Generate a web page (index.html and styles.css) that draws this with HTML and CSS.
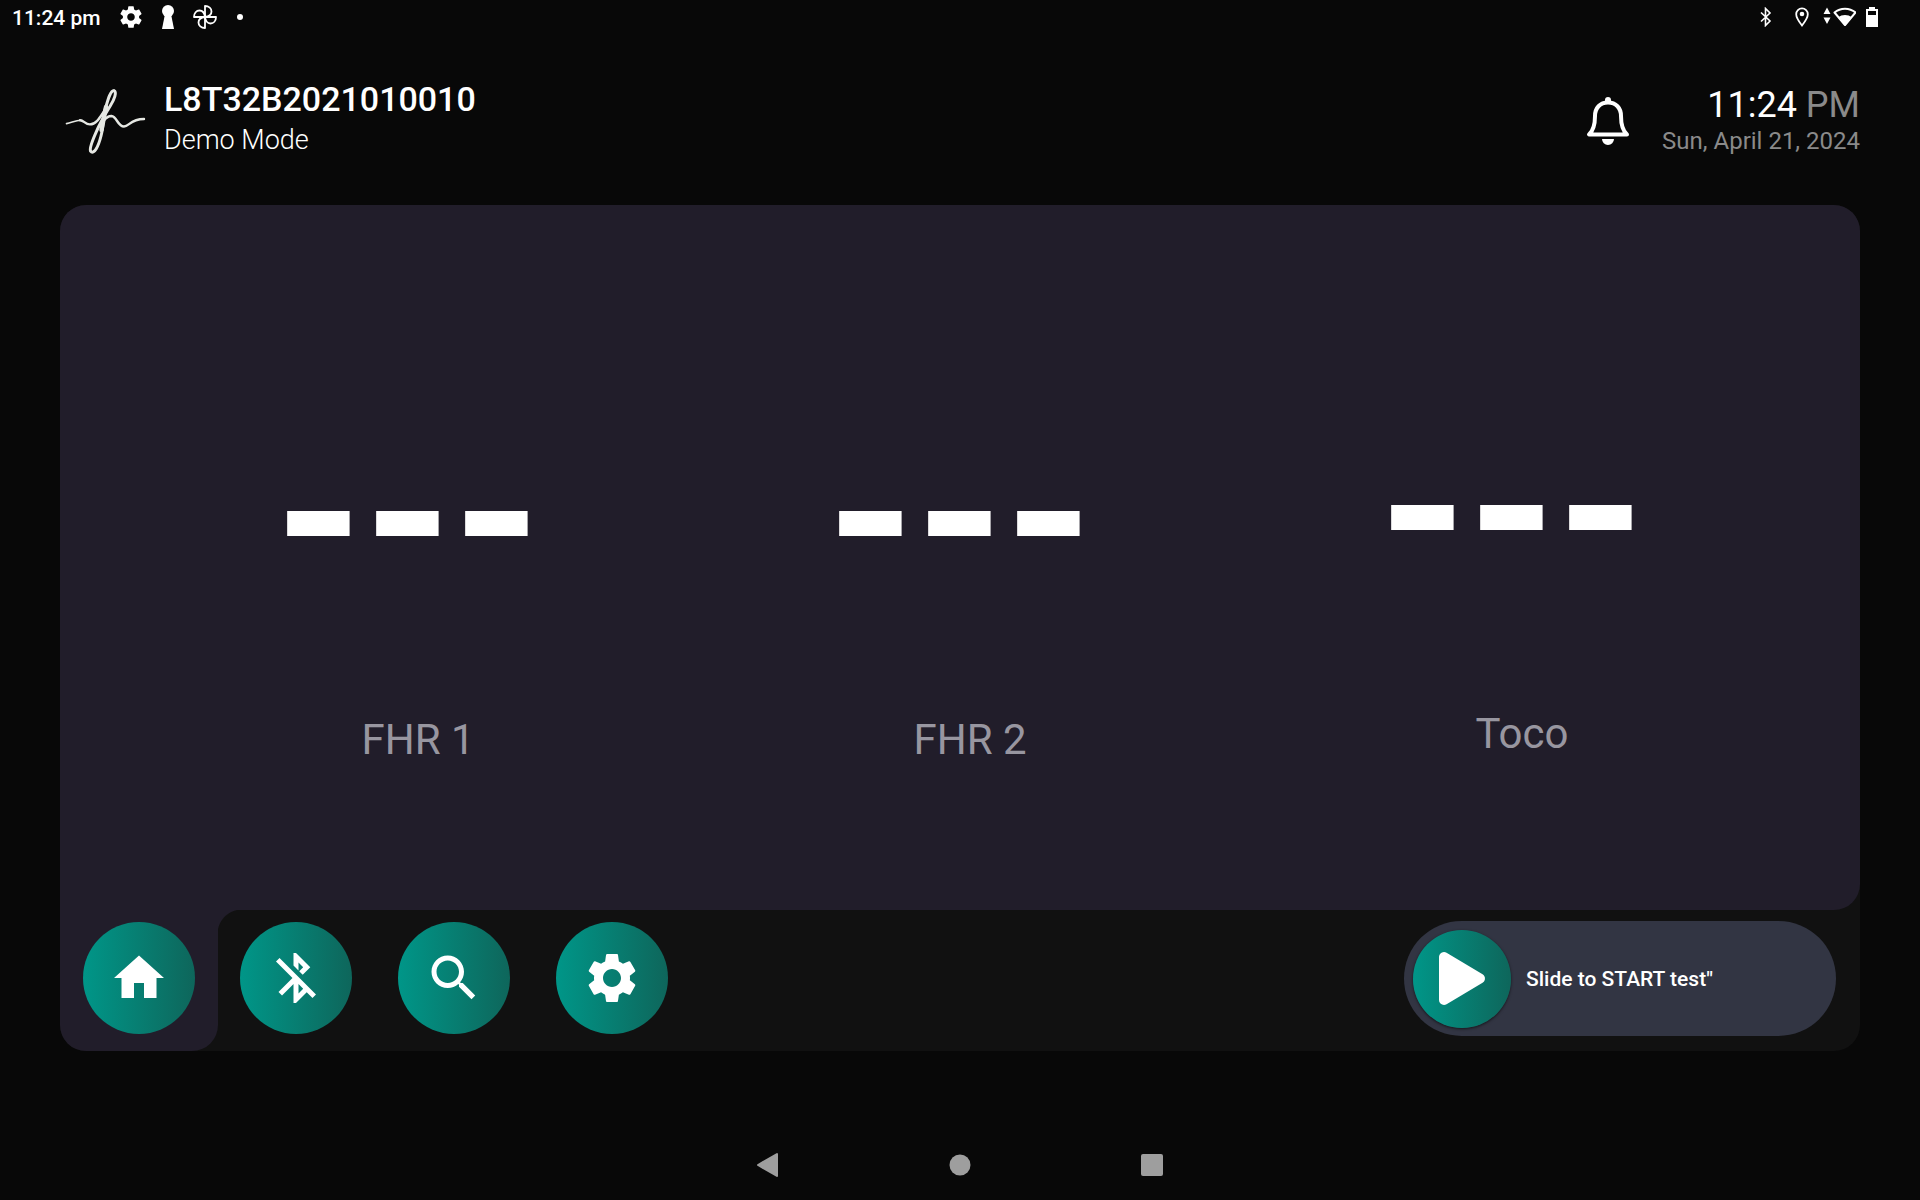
FILE: index.html
```html
<!DOCTYPE html>
<html lang="en">
	<head>
		<meta charset="utf-8">
		<meta name="viewport" content="width=device-width, initial-scale=1">
		<title>Demo Mode</title>
		<link rel="stylesheet" href="styles.css">
	</head>
	<body>
		<div class="statusBar">
			<span class="statusTime">11:24 pm</span>
			<div class="statusIcons">
				<svg width="26" height="26" viewBox="0 0 24 24"><path fill="#fff" d="M19.43 12.98c.04-.32.07-.64.07-.98s-.03-.66-.07-.98l2.11-1.65c.19-.15.24-.42.12-.64l-2-3.46c-.12-.22-.39-.3-.61-.22l-2.49 1c-.52-.4-1.08-.73-1.69-.98l-.38-2.65C14.46 2.18 14.25 2 14 2h-4c-.25 0-.46.18-.49.42l-.38 2.65c-.61.25-1.17.59-1.69.98l-2.49-1c-.23-.09-.49 0-.61.22l-2 3.46c-.13.22-.07.49.12.64l2.11 1.65c-.04.32-.07.65-.07.98s.03.66.07.98l-2.11 1.65c-.19.15-.24.42-.12.64l2 3.46c.12.22.39.3.61.22l2.49-1c.52.4 1.08.73 1.69.98l.38 2.65c.03.24.24.42.49.42h4c.25 0 .46-.18.49-.42l.38-2.65c.61-.25 1.17-.59 1.69-.98l2.49 1c.23.09.49 0 .61-.22l2-3.46c.12-.22.07-.49-.12-.64l-2.11-1.65zM12 15.5c-1.93 0-3.5-1.57-3.5-3.5s1.57-3.5 3.5-3.5 3.5 1.57 3.5 3.5-1.57 3.5-3.5 3.5z"/></svg>
				<svg width="26" height="26" viewBox="0 0 26 26"><circle cx="13" cy="7" r="6" fill="#fff"/><path fill="#fff" d="M10 10h6l3 15H7z"/></svg>
				<svg width="26" height="26" viewBox="0 0 26 26" fill="none" stroke="#fff" stroke-width="1.8" stroke-linejoin="round"><path d="M13 13V2c4 0 6.500 2.500 6.500 5.500S17 12.500 13 13"/><path d="M13 13h11c0 4-2.500 6.500-5.500 6.500S13.500 17 13 13"/><path d="M13 13v11c-4 0-6.500-2.500-6.500-5.500S9 13.500 13 13"/><path d="M13 13H2c0-4 2.500-6.500 5.500-6.500S12.500 9 13 13"/></svg>
				<span class="dot"></span>
			</div>
			<div class="systemIcons">
				<svg width="14" height="20" viewBox="0 0 14 20"><path fill="none" stroke="#fff" stroke-width="1.600" d="M2 5.500l9 8.500-4.500 4.500v-17L11 6l-9 8.500"/></svg>
				<svg width="14" height="20" viewBox="0 0 14 20"><path fill="none" stroke="#fff" stroke-width="1.800" d="M7 18.500C3.500 14 1.200 10.500 1.200 7.200a5.800 5.800 0 0 1 11.600 0c0 3.300-2.300 6.800-5.800 11.300z"/><circle cx="7" cy="7" r="2.300" fill="#fff"/></svg>
				<svg width="33" height="20" viewBox="0 0 33 20"><path fill="#fff" d="M.5 7L4 .5 7.500 7zM.5 10.500h7L4 17z"/><path fill="none" stroke="#fff" stroke-width="2" stroke-linejoin="round" d="M22 18L11.500 5.500c6-5 15-5 21 0z"/><path fill="#fff" d="M22 19l-7-8.500c4-3.300 10-3.300 14 0z"/></svg>
				<svg width="12" height="20" viewBox="0 0 12 20"><path fill="#fff" fill-rule="evenodd" d="M3 0h6v2h3v18H0V2h3zM2 4v4h8V4z"/></svg>
			</div>
		</div>

		<header class="header">
			<svg class="logo" viewBox="62 84 86 76" fill="none" stroke="#e6e8e3" stroke-linecap="round" stroke-linejoin="round">
				<path stroke-width="1.600" d="M66.500 124.600C72 123.500 76 121.200 81 121.300"/>
				<path stroke-width="2.400" d="M80 121.200c4 0 5 4.300 10 4.200 7-.2 11-9 15-14.500"/>
				<path stroke-width="3" d="M105 111c2.500-8.500 5-19.500 9-19.500 3.200 1.500.2 9-3.500 15-4.500 7-8 13-12 21.500-4 9-9.500 20-8 24 3.500 4.500 8-5 10.500-15 3-11 1.500-20 4-26"/>
				<path stroke-width="4.400" d="M106 108c-2 8-2.500 14-4.500 23"/>
				<path stroke-width="2.400" d="M103.500 122c3-4 5-5 8-5 5.500.5 6 10.500 12.500 10.500 5 0 6.500-7.500 20-7.500"/>
			</svg>
			<div class="device">
				<h1>L8T32B2021010010</h1>
				<div class="mode">Demo Mode</div>
			</div>
			<button class="bell" aria-label="Notifications">
				<svg width="44" height="50" viewBox="0 0 44 50"><path fill="none" stroke="#fff" stroke-width="4" stroke-linejoin="round" d="M22 6.500c-8 0-13 5.500-13 13.500 0 9-1.500 14.500-6 18.500h38c-4.500-4-6-9.500-6-18.500 0-8-5-13.500-13-13.500z"/><path fill="#fff" d="M19 6V4a3 3 0 0 1 6 0v2zM16 43h12a6 6 0 0 1-12 0z"/></svg>
			</button>
			<div class="clock">
				<div class="time">11:24 <span>PM</span></div>
				<div class="date">Sun, April 21, 2024</div>
			</div>
		</header>

		<main class="monitor">
			<section class="readings">
				<div class="reading">
					<div class="value">---</div>
					<div class="name">FHR 1</div>
				</div>
				<div class="reading">
					<div class="value">---</div>
					<div class="name">FHR 2</div>
				</div>
				<div class="reading toco">
					<div class="value">---</div>
					<div class="name">Toco</div>
				</div>
			</section>
			<div class="toolbar">
				<div class="tab">
					<button class="round" aria-label="Home">
						<svg width="60" height="60" viewBox="0 0 24 24"><path fill="#fff" d="M10 20v-6h4v6h5v-8h3L12 3 2 12h3v8z"/></svg>
					</button>
				</div>
				<button class="round" aria-label="Bluetooth">
					<svg width="60" height="60" viewBox="0 0 24 24"><path fill="#fff" d="M13 5.830l1.880 1.880-1.600 1.600 1.410 1.410 3.020-3.020L12 2h-1v5.030l2 2v-3.200zM5.410 4L4 5.410 10.590 12 5 17.590 6.410 19 11 14.410V22h1l4.290-4.290 2.300 2.290L20 18.590 5.410 4zM13 18.170v-3.760l1.880 1.880L13 18.170z"/></svg>
				</button>
				<button class="round" aria-label="Search">
					<svg width="60" height="60" viewBox="0 0 24 24"><path fill="#fff" d="M15.500 14h-.79l-.28-.27C15.410 12.590 16 11.110 16 9.500 16 5.910 13.090 3 9.500 3S3 5.910 3 9.500 5.910 16 9.500 16c1.610 0 3.090-.59 4.230-1.570l.27.28v.79l5 4.990L20.490 19l-4.990-5zm-6 0C7.010 14 5 11.990 5 9.500S7.010 5 9.500 5 14 7.010 14 9.500 11.990 14 9.500 14z"/></svg>
				</button>
				<button class="round" aria-label="Settings">
					<svg width="60" height="60" viewBox="0 0 24 24"><path fill="#fff" d="M19.140 12.940c.04-.3.06-.61.06-.94 0-.32-.02-.64-.07-.94l2.030-1.580c.18-.14.23-.41.12-.61l-1.920-3.320c-.12-.22-.37-.29-.59-.22l-2.390.96c-.5-.38-1.030-.7-1.620-.94l-.36-2.540c-.04-.24-.24-.41-.48-.41h-3.840c-.24 0-.43.17-.47.41l-.36 2.540c-.59.24-1.130.57-1.620.94l-2.390-.96c-.22-.08-.47 0-.59.22L2.740 8.870c-.12.21-.08.47.12.61l2.030 1.580c-.05.3-.09.63-.09.94s.02.64.07.94l-2.030 1.580c-.18.14-.23.41-.12.61l1.920 3.320c.12.22.37.29.59.22l2.390-.96c.5.38 1.030.7 1.620.94l.36 2.540c.05.24.24.41.48.41h3.840c.24 0 .44-.17.47-.41l.36-2.540c.59-.24 1.130-.56 1.620-.94l2.390.96c.22.08.47 0 .59-.22l1.920-3.320c.12-.22.07-.47-.12-.61l-2.010-1.580zM12 15.600c-1.980 0-3.600-1.620-3.600-3.600s1.620-3.600 3.600-3.600 3.600 1.620 3.600 3.600-1.620 3.600-3.600 3.600z"/></svg>
				</button>
				<div class="slide">
					<input type="range" id="startTest" min="0" max="100" value="0">
					<svg class="play" width="98" height="98" viewBox="0 0 98 98"><path fill="#fff" stroke="#fff" stroke-width="10" stroke-linejoin="round" d="M31 28v43l36-21.500z"/></svg>
					<label for="startTest">Slide to START test"</label>
				</div>
			</div>
		</main>

		<nav class="navBar">
			<button aria-label="Back"><svg width="24" height="26" viewBox="0 0 24 26"><path fill="#9e9e9e" stroke="#9e9e9e" stroke-width="2" stroke-linejoin="round" d="M21 2v22L2 13z"/></svg></button>
			<button aria-label="Home screen"><svg width="24" height="26" viewBox="0 0 24 26"><circle cx="12" cy="13" r="10.500" fill="#9e9e9e"/></svg></button>
			<button aria-label="Recent apps"><svg width="24" height="26" viewBox="0 0 24 26"><rect x="1" y="2" width="22" height="22" rx="2" fill="#9e9e9e"/></svg></button>
		</nav>
	</body>
</html>
```

FILE: styles.css
```css
*
	{
		box-sizing: border-box;
	}
body
	{
		margin: 0;
		min-height: 100vh;
		display: flex;
		flex-direction: column;
		background-color: #080808;
		color: white;
		font-family: Roboto, sans-serif;
	}
button
	{
		border: none;
		padding: 0;
		background: none;
		cursor: pointer;
	}
svg
	{
		display: block;
	}
.statusBar
	{
		display: flex;
		align-items: center;
		height: 33px;
		padding: 0 42px 0 12px;
	}
.statusTime
	{
		padding-top: 3px;
		font-size: 21px;
		font-weight: 500;
		line-height: 32px;
	}
.statusIcons
	{
		display: flex;
		align-items: center;
		gap: 11px;
		margin-left: 17px;
	}
.dot
	{
		width: 6px;
		height: 6px;
		margin-left: 8px;
		border-radius: 50%;
		background-color: white;
	}
.systemIcons
	{
		display: flex;
		gap: 10px;
		margin-left: auto;
	}
.systemIcons svg:first-child
	{
		margin-right: 12px;
	}
.systemIcons svg:nth-child(2)
	{
		margin-right: 4px;
	}
.header
	{
		display: flex;
		align-items: center;
		height: 172px;
		padding: 4px 60px 0 62px;
	}
.logo
	{
		width: 86px;
		height: 76px;
	}
.device
	{
		margin-left: 16px;
		padding-bottom: 4px;
	}
h1
	{
		margin: 0;
		font-size: 34px;
		font-weight: 500;
		line-height: 42px;
	}
.mode
	{
		font-size: 27px;
		font-weight: 300;
		line-height: 40px;
	}
.bell
	{
		margin-left: auto;
	}
.clock
	{
		margin-left: 32px;
		text-align: right;
	}
.time
	{
		font-size: 36px;
		line-height: 40px;
	}
.time span
	{
		color: #8a8a8a;
	}
.date
	{
		color: #8a8a8a;
		font-size: 24px;
		line-height: 32px;
	}
.monitor
	{
		flex: 1;
		display: flex;
		flex-direction: column;
		margin: 0 60px;
		border-radius: 26px;
		background-color: #111;
	}
.readings
	{
		flex: 1;
		display: grid;
		grid-template-columns: repeat(3, 1fr);
		align-items: center;
		padding: 0 72px;
		border-radius: 26px 26px 26px 0;
		background-color: #211d2a;
	}
.reading
	{
		text-align: center;
	}
.toco
	{
		padding-bottom: 12px;
	}
.value
	{
		margin-bottom: 36px;
		font-size: 226px;
		font-weight: 700;
		line-height: 328px;
	}
.name
	{
		padding-left: 20px;
		color: #9896a0;
		font-size: 42px;
		line-height: 48px;
	}
.toolbar
	{
		display: flex;
		gap: 46px;
		padding-right: 24px;
	}
.round
	{
		display: grid;
		place-items: center;
		width: 112px;
		height: 112px;
		margin-top: 12px;
		border-radius: 50%;
		background: linear-gradient(90deg, #009688, #0e665b);
	}
.tab
	{
		position: relative;
		margin-right: -24px;
		padding: 0 23px 17px;
		border-radius: 0 0 26px 26px;
		background-color: #211d2a;
	}
/* inner corner between the tab and the panel above */
.tab::after
	{
		content: "";
		position: absolute;
		top: 0;
		left: 100%;
		width: 24px;
		height: 24px;
		background: radial-gradient(circle at 100% 100%, transparent 24px, #211d2a 25px);
	}
.slide
	{
		position: relative;
		width: 432px;
		height: 115px;
		margin: 11px 0 0 auto;
	}
.slide input
	{
		appearance: none;
		width: 100%;
		height: 100%;
		margin: 0;
		padding: 0 9px;
		border-radius: 58px;
		background-color: #323543;
		cursor: pointer;
	}
.slide input::-webkit-slider-thumb
	{
		appearance: none;
		width: 98px;
		height: 98px;
		border-radius: 50%;
		background: linear-gradient(90deg, #009688, #0e665b);
		box-shadow: 0 1px 3px rgba(0, 0, 0, .6);
	}
.slide .play
	{
		position: absolute;
		top: 8px;
		left: 9px;
		pointer-events: none;
	}
.slide label
	{
		position: absolute;
		top: 0;
		left: 122px;
		font-size: 21px;
		font-weight: 500;
		line-height: 117px;
		pointer-events: none;
	}
.navBar
	{
		display: flex;
		justify-content: center;
		gap: 144px;
		padding: 101px 0 24px;
	}
.navBar button
	{
		display: grid;
		place-items: center;
		width: 48px;
		height: 24px;
	}
```
